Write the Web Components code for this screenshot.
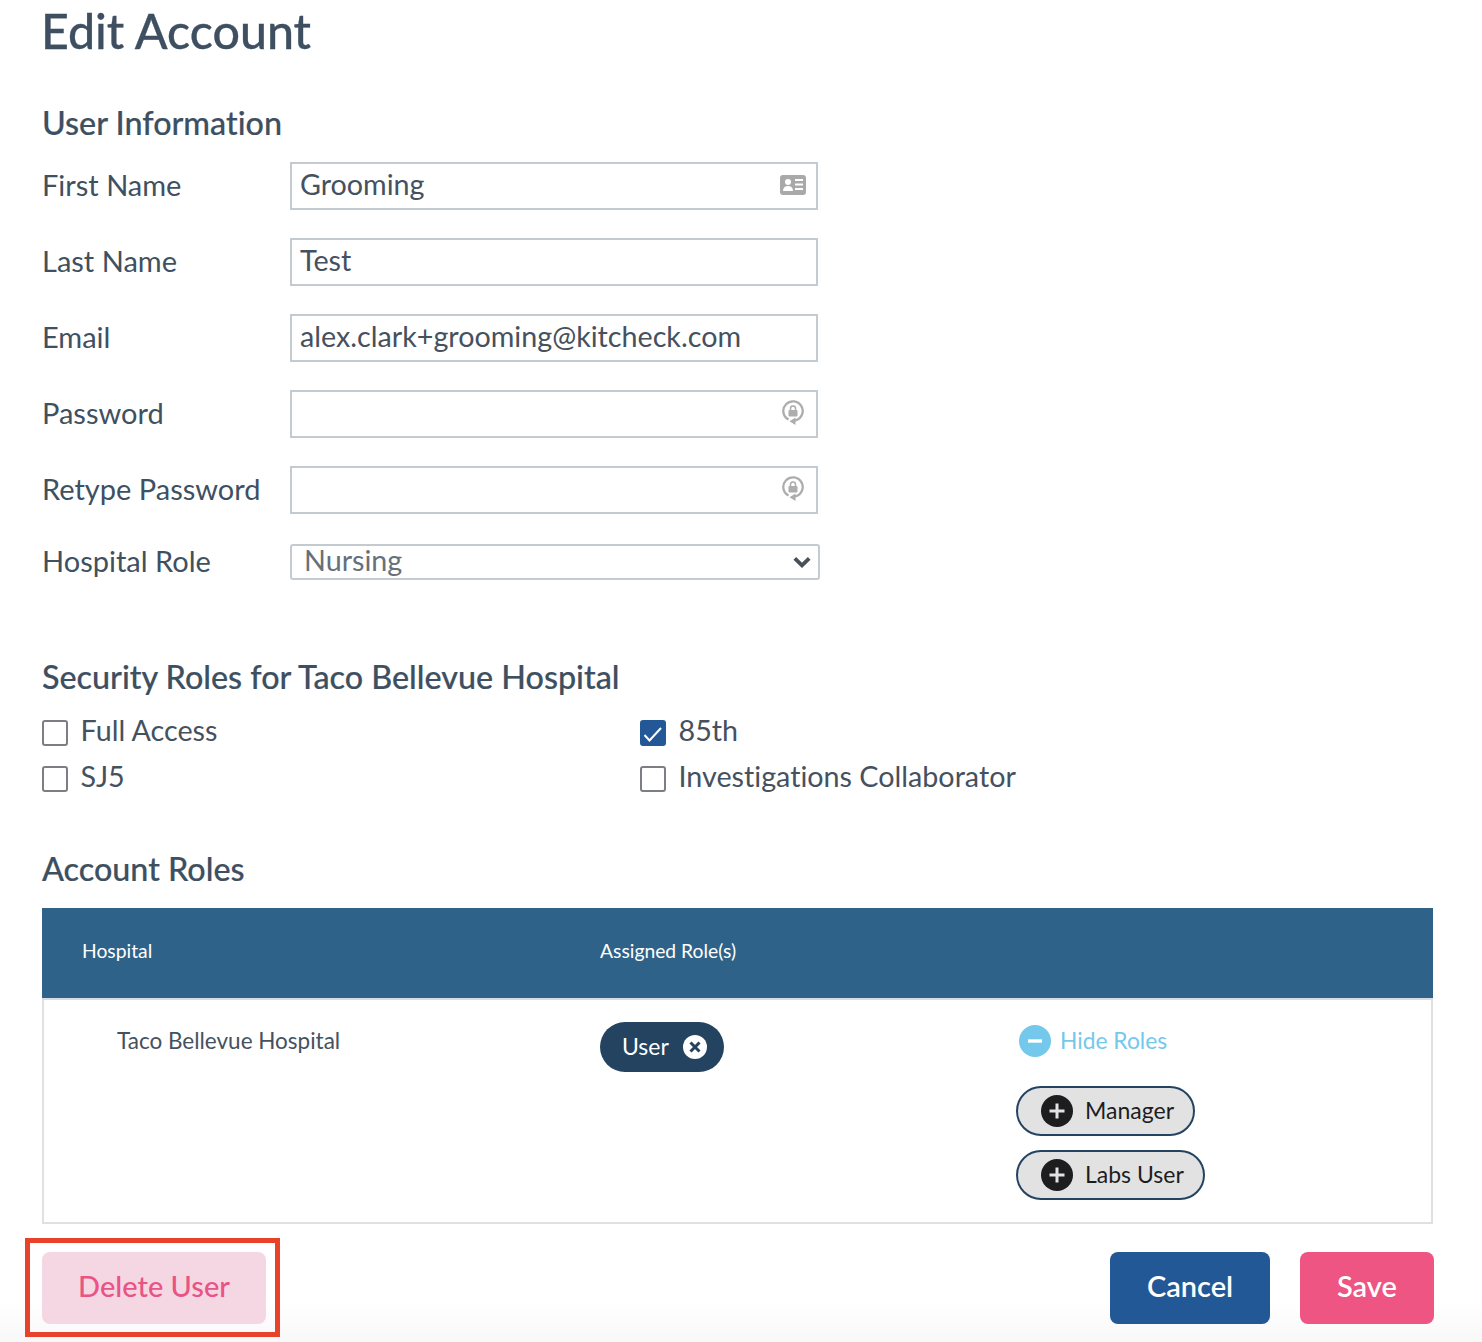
<!DOCTYPE html>
<html>
<head>
<meta charset="utf-8">
<title>Edit Account</title>
<style>
  html, body { margin: 0; padding: 0; background: #fff; }
  body { font-family: Lato, "Liberation Sans", sans-serif; color: #3f5061; font-variant-ligatures: none; }
</style>
</head>
<body>
<edit-account></edit-account>

<script>
const ICONS = {
  card: `<svg width="26" height="20" viewBox="0 0 26 20"><rect width="26" height="20" rx="3" fill="#a9a9a9"/><circle cx="8" cy="7" r="3" fill="#fff"/><path d="M3 16c0-3.200 2-5 5-5s5 1.800 5 5z" fill="#fff"/><path d="M15 5h8M15 9.500h8M15 14h8" stroke="#fff" stroke-width="2"/></svg>`,
  lock: `<svg class="lock" width="22" height="26" viewBox="0 0 22 26"><path d="M6.500 19.600A9.700 9.700 0 1 1 13 20.500" fill="none" stroke="#adadad" stroke-width="2.300"/><path d="M13.500 17.500v7.500l-6-3.750z" fill="#adadad"/><rect x="6.500" y="10" width="9" height="6.500" rx="1" fill="#adadad"/><path d="M8.500 10.500V8.500a2.500 2.500 0 0 1 5 0v2" fill="none" stroke="#adadad" stroke-width="1.500"/></svg>`,
  chevron: `<svg width="18" height="12" viewBox="0 0 18 12"><path d="M1.800 2.300L9 9.300l7.200-7" fill="none" stroke="#4a5058" stroke-width="3.800"/></svg>`,
  check: `<svg width="26" height="26" viewBox="0 0 26 26"><path d="M4.500 15l5 5.500L21 8" fill="none" stroke="#fff" stroke-width="2"/></svg>`,
  remove: `<svg width="24" height="24" viewBox="0 0 24 24"><circle cx="12" cy="12" r="12" fill="#fff"/><path d="M7.500 7.500l9 9M16.500 7.500l-9 9" stroke="#234361" stroke-width="3"/></svg>`,
  minus: `<svg width="32" height="32" viewBox="0 0 32 32"><circle cx="16" cy="16" r="16" fill="#74c8ec"/><path d="M9 16h14" stroke="#fff" stroke-width="3.400"/></svg>`,
  plus: `<svg width="32" height="32" viewBox="0 0 32 32"><circle cx="16" cy="16" r="16" fill="#1d1d1f"/><path d="M16 8.500v15M8.500 16h15" stroke="#e2e2e2" stroke-width="3"/></svg>`,
};

class SectionTitle extends HTMLElement {
  constructor() {
    super();
    this.attachShadow({ mode: 'open' }).innerHTML = `
      <style>
        :host { display: block; font-size: 32.3px; line-height: 40px; color: #3d4f60; font-weight: 500; -webkit-text-stroke: 0.2px #3d4f60; }
      </style>
      <slot></slot>`;
  }
}

class FormField extends HTMLElement {
  constructor() {
    super();
    const icon = ICONS[this.getAttribute('icon')] || '';
    this.attachShadow({ mode: 'open' }).innerHTML = `
      <style>
        :host { display: flex; align-items: center; height: 48px; font-size: 28.7px; }
        .label { width: 248px; flex: none; font-size: 29px; color: #3f5061; padding-bottom: 4px; }
        .box {
          box-sizing: border-box; width: 528px; height: 48px; padding: 0 10px 0 8px;
          border: 2px solid #c4cbd0; display: flex; align-items: center; justify-content: space-between;
          color: #45515e;
        }
        span { padding-bottom: 4px; }
        svg { display: block; margin-bottom: 3px; }
        svg.lock { margin-right: 2px; }
      </style>
      <div class="label">${this.getAttribute('label')}</div>
      <div class="box"><span><slot></slot></span>${icon}</div>`;
  }
}

class SelectField extends HTMLElement {
  constructor() {
    super();
    this.attachShadow({ mode: 'open' }).innerHTML = `
      <style>
        :host { display: flex; align-items: center; height: 36px; margin-top: 2px; font-size: 28.7px; }
        .label { width: 248px; flex: none; font-size: 29px; color: #3f5061; padding-bottom: 4px; }
        .box {
          box-sizing: border-box; width: 530px; height: 36px; padding: 0 7px 0 12px;
          border: 2px solid #c4cbd0; border-radius: 3px; display: flex; align-items: center;
          justify-content: space-between; color: #66707a;
        }
        span { padding-bottom: 4px; }
        svg { display: block; }
      </style>
      <div class="label">${this.getAttribute('label')}</div>
      <div class="box"><span><slot></slot></span>${ICONS.chevron}</div>`;
  }
}

class RoleCheck extends HTMLElement {
  constructor() {
    super();
    const on = this.hasAttribute('checked');
    this.attachShadow({ mode: 'open' }).innerHTML = `
      <style>
        :host { display: flex; align-items: center; gap: 12.5px; height: 26px; font-size: 28.7px; color: #45515e; }
        .box {
          box-sizing: border-box; width: 26px; height: 26px; flex: none; border-radius: 3px;
          border: 2px solid ${on ? '#235897' : '#7b7f83'}; background: ${on ? '#235897' : '#fff'};
          position: relative;
        }
        .text { padding-bottom: 6px; }
        svg { position: absolute; left: -2px; top: -2px; }
      </style>
      <div class="box">${on ? ICONS.check : ''}</div>
      <div class="text"><slot></slot></div>`;
  }
}

class RolePill extends HTMLElement {
  constructor() {
    super();
    const add = this.hasAttribute('add');
    this.attachShadow({ mode: 'open' }).innerHTML = add ? `
      <style>
        :host {
          box-sizing: border-box; display: inline-flex; align-items: center; gap: 12px; height: 50px;
          padding: 0 19px 0 23px; border: 2px solid #234361; border-radius: 25px;
          background: #e2e2e2; color: #1d1d1f; font-size: 23px;
        }
        span { padding-bottom: 2px; }
        svg { display: block; }
      </style>
      ${ICONS.plus}<span><slot></slot></span>` : `
      <style>
        :host {
          box-sizing: border-box; display: inline-flex; align-items: center; gap: 14px; height: 50px;
          padding: 0 17px 0 22px; border-radius: 25px;
          background: #234361; color: #fff; font-size: 23px;
        }
        span { padding-bottom: 2px; }
        svg { display: block; }
      </style>
      <span><slot></slot></span>${ICONS.remove}`;
  }
}

class RolesTable extends HTMLElement {
  constructor() {
    super();
    this.attachShadow({ mode: 'open' }).innerHTML = `
      <style>
        :host { display: block; box-sizing: border-box; width: 1391px; }
        .row { display: grid; }
        .head {
          grid-template-columns: 558px 416px 1fr;
          height: 90px; align-items: center; background: #2f6288; color: #fff; font-size: 19.3px;
          border-bottom: 2px solid #d6dde5;
        }
        .head div { padding-bottom: 5px; }
        .head div:first-child { padding-left: 40px; }
        .body {
          grid-template-columns: 556px 416px 1fr;
          box-sizing: border-box; height: 224px;
          border: solid #e0e0e0; border-width: 0 2px 2px 2px; font-size: 22.5px; color: #45515e;
        }
        .hospital { padding: 27px 0 0 73px; line-height: 28px; }
        .assigned { padding-top: 22px; }
        .extra { padding-top: 25px; display: flex; flex-direction: column; align-items: flex-start; }
        .toggle { display: flex; align-items: center; gap: 9px; height: 32px; margin: 0 0 29px 3px; color: #74c8ec; font-size: 22.8px; }
        .toggle span { padding-bottom: 3px; }
        .toggle svg { display: block; }
        .extra role-pill + role-pill { margin-top: 14px; }
      </style>
      <div class="row head"><div>Hospital</div><div>Assigned Role(s)</div><div></div></div>
      <div class="row body">
        <div class="hospital">Taco Bellevue Hospital</div>
        <div class="assigned"><role-pill>User</role-pill></div>
        <div class="extra">
          <div class="toggle">${ICONS.minus}<span>Hide Roles</span></div>
          <role-pill add>Manager</role-pill>
          <role-pill add>Labs User</role-pill>
        </div>
      </div>`;
  }
}

class ActionButton extends HTMLElement {
  constructor() {
    super();
    this.attachShadow({ mode: 'open' }).innerHTML = `
      <style>
        :host {
          box-sizing: border-box; display: flex; align-items: center; justify-content: center;
          height: 72px; padding-bottom: 6px; border-radius: 8px; font-size: 29px; font-weight: 500;
        }
        :host([kind=delete]) { width: 224px; background: #f5d6e3; color: #e85484; }
        :host([kind=cancel]) { width: 160px; background: #235897; color: #fff; font-weight: 600; }
        :host([kind=save]) { width: 134px; background: #ee5583; color: #fff; font-weight: 600; }
      </style>
      <slot></slot>`;
  }
}

class EditAccount extends HTMLElement {
  constructor() {
    super();
    this.attachShadow({ mode: 'open' }).innerHTML = `
      <style>
        :host {
          display: block; box-sizing: border-box; width: 1482px; height: 1342px; padding: 0 48px 0 42px;
          background: linear-gradient(#fff 1300px, #f8f8f8 1342px); overflow: hidden;
        }
        h1 {
          margin: 0 0 0 -1px; padding-top: 2px; font-size: 48.3px; line-height: 56px; font-weight: 500;
          color: #3d4f60; -webkit-text-stroke: 0.3px #3d4f60;
        }
        .info { margin-top: 45px; }
        .fields { margin-top: 19px; display: flex; flex-direction: column; gap: 28px; }
        .security { margin-top: 77px; }
        .checks { margin-top: 23px; display: grid; grid-template-columns: 598px 1fr; row-gap: 20px; }
        .roles { margin-top: 57px; }
        roles-table { margin-top: 19px; }
        .actions { margin-top: 28px; display: flex; align-items: center; gap: 30px; }
        .marked { position: relative; margin-right: auto; }
        .marked::after {
          content: ''; position: absolute; left: -17px; top: -14px; width: 255px; height: 99px;
          box-sizing: border-box; border: 5px solid #e8432a;
        }
      </style>
      <h1>Edit Account</h1>
      <section-title class="info">User Information</section-title>
      <div class="fields">
        <form-field label="First Name" icon="card">Grooming</form-field>
        <form-field label="Last Name">Test</form-field>
        <form-field label="Email">alex.clark+grooming@kitcheck.com</form-field>
        <form-field label="Password" icon="lock"></form-field>
        <form-field label="Retype Password" icon="lock"></form-field>
        <select-field label="Hospital Role">Nursing</select-field>
      </div>
      <section-title class="security">Security Roles for Taco Bellevue Hospital</section-title>
      <div class="checks">
        <role-check>Full Access</role-check>
        <role-check checked>85th</role-check>
        <role-check>SJ5</role-check>
        <role-check>Investigations Collaborator</role-check>
      </div>
      <section-title class="roles">Account Roles</section-title>
      <roles-table></roles-table>
      <div class="actions">
        <div class="marked"><action-button kind="delete">Delete User</action-button></div>
        <action-button kind="cancel">Cancel</action-button>
        <action-button kind="save">Save</action-button>
      </div>`;
  }
}

customElements.define('section-title', SectionTitle);
customElements.define('form-field', FormField);
customElements.define('select-field', SelectField);
customElements.define('role-check', RoleCheck);
customElements.define('role-pill', RolePill);
customElements.define('roles-table', RolesTable);
customElements.define('action-button', ActionButton);
customElements.define('edit-account', EditAccount);
</script>
</body>
</html>
